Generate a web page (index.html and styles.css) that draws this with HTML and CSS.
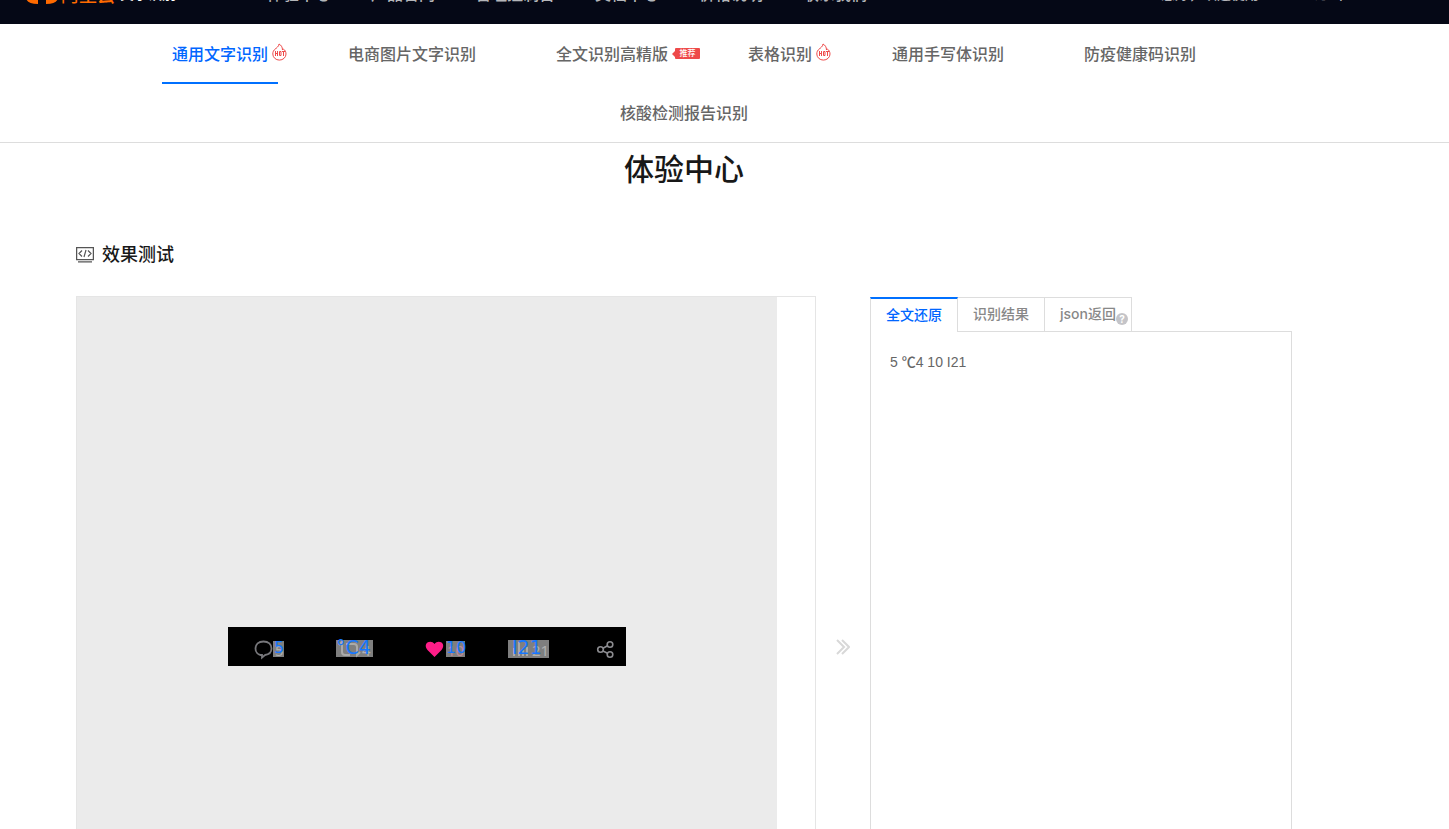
FILE: index.html
```html
<!DOCTYPE html>
<html lang="zh-CN">
<head>
    <meta charset="UTF-8">
    <meta name="viewport" content="width=device-width, initial-scale=1.0">
    <title>体验中心</title>
    <link rel="stylesheet" href="styles.css">
</head>
<body>
    <header class="header">
        <div class="header-inner">
            <a href="#" class="logo">
                <svg class="logo-mark" width="32" height="20" viewBox="0 0 32 20" fill="none" stroke="#ff6a00" stroke-width="4">
                    <path d="M12 2H7Q2 2 2 7v6q0 5 10 5M20 2h5q5 0 5 5v6q0 5-10 5M11 10h10" />
                </svg>
                <span class="logo-name">阿里云</span>
                <span class="logo-sub">文字识别AI</span>
            </a>
            <nav class="menu">
                <a href="#">体验中心</a>
                <a href="#">产品官网</a>
                <a href="#">管理控制台</a>
                <a href="#">文档中心</a>
                <a href="#">价格说明</a>
                <a href="#">联系我们</a>
            </nav>
            <div class="user">
                <a href="#">您好，欢迎使用</a>
                <a href="#">退出</a>
            </div>
        </div>
    </header>

    <nav class="types">
        <div class="types-list">
            <a href="#" class="active">通用文字识别
                <svg class="hot" width="15" height="18" viewBox="0 0 15 18" fill="none" stroke="#ee4a4a">
                    <path d="M7 1C7 4 4 4.500 3.500 6C1.500 7 .8 9 .8 11A6.500 6 0 0 0 14 11C14 9 13 7 11.500 6L10.500 7C10.500 4 9 2 7 1Z" />
                    <path d="M3.500 8v5M5.500 8v5M3.500 10.500h2M7.500 8.500h1.500v4H7.500zM10 8.500h3M11.500 8.500v4.500" />
                </svg>
            </a>
            <a href="#">电商图片文字识别</a>
            <a href="#">全文识别高精版<span class="tag">推荐</span></a>
            <a href="#">表格识别
                <svg class="hot" width="15" height="18" viewBox="0 0 15 18" fill="none" stroke="#ee4a4a">
                    <path d="M7 1C7 4 4 4.500 3.500 6C1.500 7 .8 9 .8 11A6.500 6 0 0 0 14 11C14 9 13 7 11.500 6L10.500 7C10.500 4 9 2 7 1Z" />
                    <path d="M3.500 8v5M5.500 8v5M3.500 10.500h2M7.500 8.500h1.500v4H7.500zM10 8.500h3M11.500 8.500v4.500" />
                </svg>
            </a>
            <a href="#">通用手写体识别</a>
            <a href="#">防疫健康码识别</a>
            <a href="#">核酸检测报告识别</a>
        </div>
    </nav>

    <main class="container">
        <h1>体验中心</h1>
        <h2>
            <svg width="18" height="16" viewBox="0 0 18 16" fill="none" stroke="#555">
                <path d="M.6 .6h16.800v12H.6zM2 14.800h14" stroke-width="1.300" />
                <path d="M6 3.500L3 6.500l3 3M12 3.500l3 3-3 3M10 3L8 10" stroke-width="1.200" />
            </svg>
            效果测试
        </h2>
        <div class="test">
            <div class="preview">
                <div class="canvas">
                    <svg width="398" height="39" viewBox="0 0 398 39" class="shot">
                        <rect width="398" height="39" fill="#000" />
                        <path d="M35.500 14.500c-5 0-8 3-8 7 0 3.500 2.500 6 5 6.500h1.500v2.500l3-2.500c4-.5 6.500-3 6.500-6.500 0-4-3-7-8-7z" fill="none" stroke="#77777b" stroke-width="1.800" />
                        <rect x="45" y="14" width="11" height="16" fill="#7f7f7f" />
                        <text x="47" y="29" class="ghost">5</text>
                        <text x="46" y="26" class="word">5</text>
                        <rect x="108" y="13" width="37" height="17" fill="#7f7f7f" />
                        <path d="M111 18l3-3v10q0 3 3 3h5M118 17h8q3 0 3 3v8l3-3" fill="none" stroke="#aaa" stroke-width="2" />
                        <text x="134" y="29" class="ghost">4</text>
                        <text x="108" y="27" class="word wide">°C4</text>
                        <path d="M206.500 30L199.500 23C194 16 203 12 206.500 17C210 12 219 16 213.500 23Z" fill="#ff1d88" />
                        <rect x="218" y="14" width="19" height="16" fill="#7f7f7f" />
                        <text x="219" y="29" class="ghost pink">10</text>
                        <text x="218" y="26" class="word">10</text>
                        <rect x="280" y="13" width="41" height="18" fill="#7f7f7f" />
                        <path d="M286 29v-8M291 29V15M295 29v-6M299 29v-9" stroke="#aaa" stroke-width="2" />
                        <text x="304" y="29" class="ghost">21</text>
                        <text x="284" y="27" class="word wide">I21</text>
                        <g fill="none" stroke="#8c8c90" stroke-width="1.600">
                            <circle cx="372.500" cy="22.500" r="2.800" />
                            <circle cx="382" cy="17.500" r="2.800" />
                            <circle cx="382" cy="27.500" r="2.800" />
                            <path d="M375 21.300l4.500-2.500M375 24l4.500 2.300" />
                        </g>
                    </svg>
                </div>
            </div>
            <svg class="arrow" width="14" height="16" viewBox="0 0 14 16" fill="none" stroke="#d8d8d8" stroke-width="2">
                <path d="M1 1l7 7-7 7M6 1l7 7-7 7" />
            </svg>
            <div class="result">
                <div class="tabs">
                    <button type="button" class="active">全文还原</button>
                    <button type="button">识别结果</button>
                    <button type="button">json返回<span class="help">?</span></button>
                </div>
                <div class="result-text">5 ℃4 10 I21</div>
            </div>
        </div>
    </main>
</body>
</html>
```
FILE: styles.css
```css
* {
    box-sizing: border-box;
}
body {
    margin: 0;
    background-color: #fff;
    color: #666;
    font-family: Inter, "Noto Sans CJK SC", sans-serif;
    font-size: 14px;
    font-weight: 500;
}
a {
    color: inherit;
    text-decoration: none;
}

/* top bar, scrolled mostly out of view */
.header {
    display: flex;
    align-items: flex-end;
    height: 24px;
    overflow: hidden;
    background-color: #050816;
}
.header-inner {
    display: flex;
    align-items: center;
    flex: 1;
    height: 60px;
    padding: 0 106px 0 26px;
    color: #b4b5b9;
    font-size: 16px;
    line-height: 24px;
}
.logo {
    display: flex;
    align-items: center;
    width: 241px;
}
.logo-name {
    margin-left: 3px;
    color: #ff6a00;
    font-size: 18px;
    line-height: 32px;
    padding-top: 4px;
}
.logo-sub {
    margin-left: 5px;
    color: #fff;
    font-size: 14px;
    font-weight: bold;
}
.menu {
    display: flex;
    gap: 40px;
}
.user {
    display: flex;
    gap: 56px;
    margin-left: auto;
    font-size: 14px;
}

/* recognition types */
.types {
    border-bottom: 1px solid #ddd;
}
.types-list {
    display: flex;
    flex-wrap: wrap;
    justify-content: center;
    column-gap: 60px;
    max-width: 1216px;
    margin-left: 76px;
}
.types-list a {
    position: relative;
    height: 59px;
    padding: 0 10px;
    font-size: 16px;
    line-height: 61px;
}
.types-list .active {
    color: #06f;
}
.types-list .active::after {
    content: "";
    position: absolute;
    left: 0;
    right: 0;
    bottom: -1px;
    height: 2px;
    background-color: #0070ff;
}
.hot {
    position: absolute;
    left: calc(100% - 6px);
    top: 19px;
}
.tag {
    position: absolute;
    left: calc(100% - 3px);
    top: 24px;
    width: 25px;
    border-radius: 1px;
    background-color: #ee4a4a;
    color: #fff;
    font-size: 8px;
    line-height: 11px;
    text-align: center;
}
.tag::before {
    content: "";
    position: absolute;
    right: 100%;
    top: 3px;
    border: 3px solid transparent;
    border-left: none;
    border-right-color: #ee4a4a;
}

.container {
    max-width: 1216px;
    margin-left: 76px;
}
h1 {
    margin: 4px 0 0;
    color: #181818;
    font-size: 30px;
    font-weight: 500;
    line-height: 44px;
    text-align: center;
}
h2 {
    display: flex;
    align-items: center;
    gap: 8px;
    margin: 50px 0 28px;
    color: #181818;
    font-size: 18px;
    font-weight: 500;
    line-height: 27px;
}
.test {
    display: flex;
}
.preview {
    flex: 0 1 740px;
    padding-right: 38px;
    border: 1px solid #e5e5e5;
}
.canvas {
    display: flex;
    align-items: center;
    justify-content: center;
    height: 699px;
    background-color: #ebebeb;
}
.word {
    fill: #1677ff;
    font-family: "DejaVu Sans", sans-serif;
    font-size: 16px;
    font-weight: 400;
}
.wide {
    font-size: 19px;
}
.ghost {
    fill: #b0b0b0;
    font-family: "Noto Sans", sans-serif;
    font-size: 15px;
    font-weight: 400;
}
.pink {
    fill: #c08a9a;
}
.arrow {
    flex: none;
    align-self: center;
    margin: 0 20px;
}
.result {
    display: flex;
    flex-direction: column;
    flex: 1;
    padding-top: 1px;
}
.tabs {
    display: flex;
}
.tabs button {
    position: relative;
    width: 87px;
    height: 34px;
    padding: 0 0 4px;
    border: 1px solid #ddd;
    border-width: 1px 1px 0 0;
    background-color: #fff;
    color: #888;
    font: inherit;
}
.tabs .active {
    width: 88px;
    height: 35px;
    margin-bottom: -1px;
    border-top: 2px solid #0070ff;
    border-left-width: 1px;
    color: #06f;
}
.help {
    position: absolute;
    right: 3px;
    bottom: 6px;
    width: 12px;
    border-radius: 50%;
    background-color: #c4c4c8;
    color: #fff;
    font-size: 10px;
    font-weight: bold;
    line-height: 12px;
}
.result-text {
    flex: 1;
    padding: 20px 19px;
    border: 1px solid #ddd;
    font-family: "Liberation Sans", "Noto Sans CJK SC", sans-serif;
    line-height: 21px;
}
```
